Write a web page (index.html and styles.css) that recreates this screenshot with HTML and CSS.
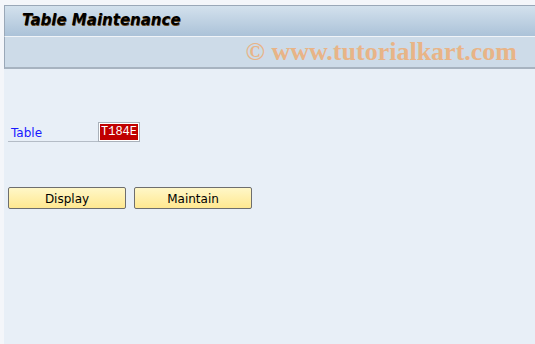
FILE: index.html
```html
<!DOCTYPE html>
<html>
<head>
<meta charset="utf-8">
<link rel="stylesheet" href="styles.css">
</head>
<body>
<div class="frame">
  <div class="titlebar"><span class="title">Table Maintenance</span></div>
  <div class="toolbar"><span class="watermark">© www.tutorialkart.com</span></div>
  <div class="content">
    <div class="field-row">
      <span class="label">Table</span>
      <span class="input"><span class="value">T184E</span></span>
    </div>
    <div class="buttons">
      <button class="btn">Display</button>
      <button class="btn">Maintain</button>
    </div>
  </div>
</div>
</body>
</html>
```

FILE: styles.css
```css
html, body {
  margin: 0;
  padding: 0;
  width: 535px;
  height: 344px;
  overflow: hidden;
  background: #f4f6fa;
}
.frame {
  margin: 5px 0 0 4px;
  height: 339px;
  display: flex;
  flex-direction: column;
  font-family: Tahoma, "DejaVu Sans", sans-serif;
}
.titlebar {
  border-top: 1px solid #9aa8b8;
  border-left: 1px solid #9aa8b8;
  background: linear-gradient(#d3e1ed, #abc2d8);
  display: flex;
  align-items: center;
  padding-left: 17px;
  padding-bottom: 2px;
  box-sizing: border-box;
  height: 31px;
}
.title {
  font-family: "DejaVu Sans", sans-serif;
  font-weight: bold;
  font-style: italic;
  font-size: 15px;
  color: #000;
  text-shadow: 0.5px 0.5px 0 #6b4a20;
}
.toolbar {
  height: 33px;
  box-sizing: border-box;
  border-top: 1px solid #f0f4f8;
  border-left: 1px solid #9aa8b8;
  border-bottom: 2px solid #a7b3c0;
  background: #cddbe8;
  display: flex;
  align-items: center;
  justify-content: flex-end;
  padding-right: 18px;
}
.watermark {
  font-family: "Liberation Serif", serif;
  font-weight: bold;
  font-size: 26px;
  line-height: 28px;
  color: #e8b487;
}
.content {
  flex: 1;
  background: #e8eff7;
  padding: 53px 0 0 4px;
}
.field-row {
  display: flex;
  align-items: flex-end;
  height: 20px;
}
.label {
  width: 90px;
  height: 19px;
  box-sizing: border-box;
  border-bottom: 1px solid #b4bcc6;
  color: #1a1aff;
  font-size: 12px;
  padding-left: 3px;
  line-height: 20px;
}
.input {
  width: 42px;
  height: 20px;
  box-sizing: border-box;
  border: 1px solid #a9b1ba;
  background: #fff;
  padding: 1px;
  display: flex;
}
.value {
  flex: 1;
  background: #c00000;
  color: #fff;
  font-family: "Liberation Mono", monospace;
  font-size: 12px;
  line-height: 16px;
  padding-left: 1px;
}
.buttons {
  display: flex;
  gap: 8px;
  margin-top: 45px;
}
.btn {
  width: 118px;
  height: 22px;
  border: 1px solid #6e6e6e;
  border-radius: 2px;
  background: linear-gradient(#fff7c8, #ffe890);
  font-family: Tahoma, "DejaVu Sans", sans-serif;
  font-size: 12px;
  line-height: 22px;
  color: #000;
  padding: 0;
}
```
